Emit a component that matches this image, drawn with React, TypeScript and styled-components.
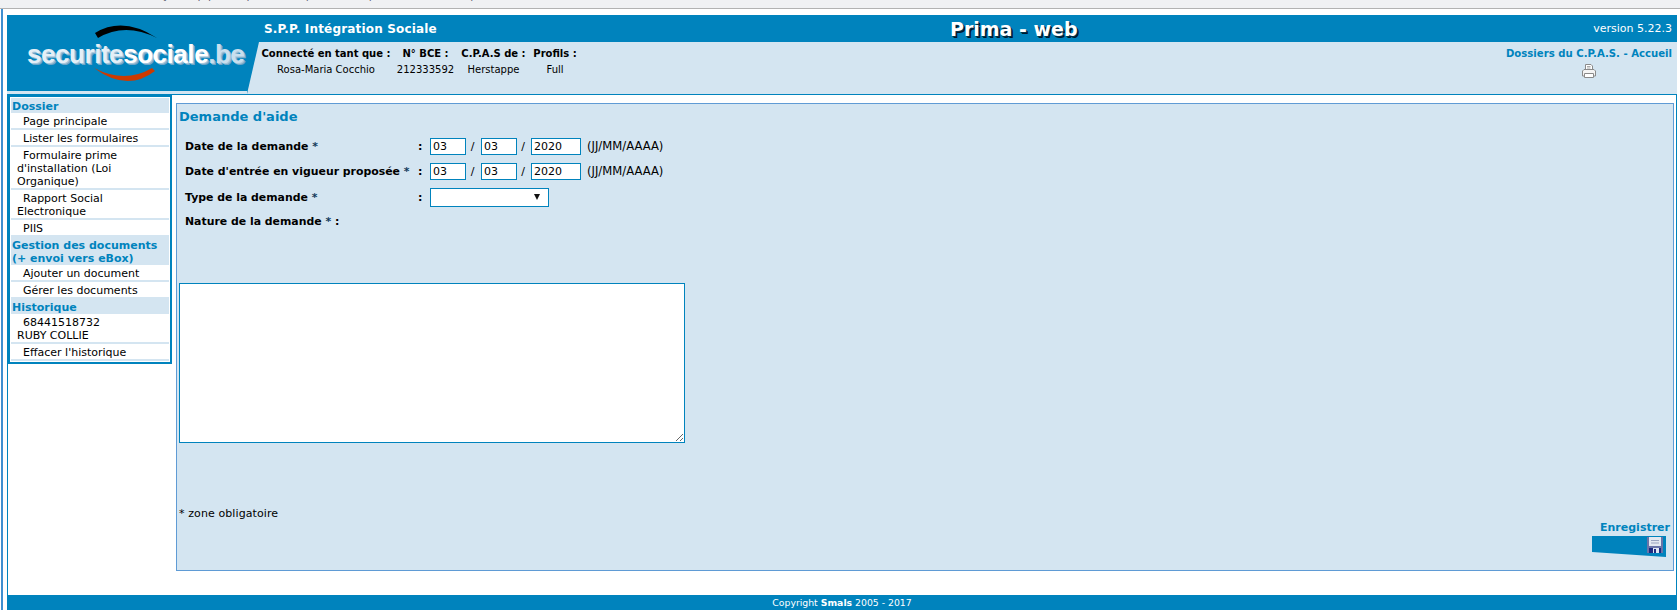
import React from 'react';
import styled, { createGlobalStyle } from 'styled-components';

const BLUE = '#0083bd';
const LIGHT = '#d4e5f1';

const GlobalStyle = createGlobalStyle`
    html, body {
        margin: 0;
        padding: 0;
        background: #fff;
        font-family: "DejaVu Sans", Verdana, sans-serif;
        font-size: 11px;
        color: #000;
    }
`;

const Page = styled.div`
    height: 610px;
    overflow: hidden;
`;

const BrowserStrip = styled.div`
    height: 8px;
    background: #f0f1f3;
    border-bottom: 1px solid #b2b2b2;
    overflow: hidden;
    padding-left: 163px;
    color: #667;
    line-height: 13px;
    white-space: pre;
`;

const ClippedLine = styled.div`
    margin-top: -11px;
`;

const Frame = styled.div`
    margin-left: 1px;
    border-left: 2px solid #3f8fd0;
    padding: 6px 3px 0 4px;
`;

const Header = styled.header`
    display: grid;
    grid-template-columns: 240px 1fr;
    height: 79px;
    background: ${BLUE};
    border-bottom: 1px solid ${BLUE};
`;

const LogoCell = styled.div`
    position: relative;
    display: flex;
    align-items: center;
    height: 76px;
    padding-left: 20px;
    border-bottom: 3px solid ${LIGHT};
`;

const LogoArcs = styled.svg`
    position: absolute;
    left: 80px;
    top: 8px;
`;

const LogoText = styled.div`
    position: relative;
    font-family: "Liberation Sans", Arial, sans-serif;
    font-weight: bold;
    font-size: 26px;
    letter-spacing: -0.45px;
    line-height: 30px;
    margin-top: 1px;
    white-space: nowrap;
    color: #fff;
    text-shadow: 1px 1px 0 #a4c6dc, 2px 2px 0 #6fa6c8;
`;

const LogoPart = styled.span<{ $tone: string }>`
    color: ${(p) => p.$tone};
`;

const HeaderRight = styled.div`
    display: flex;
    flex-direction: column;
`;

const TopBar = styled.div`
    display: grid;
    grid-template-columns: 703px auto 1fr;
    align-items: center;
    height: 27px;
    padding: 0 5px 0 17px;
    color: #fff;
    box-sizing: border-box;
`;

const Agency = styled.div`
    font-weight: bold;
    font-size: 12px;
    letter-spacing: 0.17px;
`;

const AppTitle = styled.div`
    font-weight: bold;
    font-size: 19px;
    margin-left: -17px;
    color: #fff;
    text-shadow: 1px 1px 0 #00314d, 2px 2px 0 #00182a;
`;

const Version = styled.div`
    justify-self: end;
    font-size: 11px;
`;

const SubBar = styled.div`
    display: flex;
    justify-content: space-between;
    height: 52px;
    padding: 5px 5px 0 14px;
    box-sizing: border-box;
    background: ${LIGHT};
    clip-path: polygon(12px 0, 100% 0, 100% 100%, 0 100%);
`;

const UserInfo = styled.div`
    display: grid;
    grid-template-columns: 130px 69px 67px 56px;
    grid-auto-rows: 13px;
    row-gap: 3px;
    justify-items: center;
    line-height: 13px;
    align-self: flex-start;
`;

const InfoHead = styled.div`
    font-weight: bold;
    font-size: 10px;
    white-space: nowrap;
`;

const InfoValue = styled.div`
    font-size: 10px;
    white-space: nowrap;
`;

const Links = styled.div`
    display: flex;
    flex-direction: column;
    align-items: center;
    line-height: 13px;
`;

const LinkRow = styled.div`
    color: ${BLUE};
    font-weight: bold;
    font-size: 10.15px;
`;

const PrinterIcon = styled.svg`
    margin-top: 3px;
`;

const Body = styled.div`
    display: flex;
    height: 500px;
    border-left: 1px solid ${BLUE};
    border-right: 1px solid ${BLUE};
`;

const SideColumn = styled.aside`
    width: 164px;
    flex: none;
`;

const SideMenu = styled.nav`
    box-sizing: border-box;
    border: 2px solid ${BLUE};
    padding: 1px;
    background: #fff;
`;

const MenuHead = styled.div`
    background: ${LIGHT};
    color: ${BLUE};
    font-weight: bold;
    font-size: 11px;
    line-height: 13px;
    padding: 2px 0 0 1px;
`;

const MenuItem = styled.div`
    line-height: 13px;
    font-size: 11px;
    padding: 2px 0 0 6px;
    text-indent: 6px;
    border-bottom: 2px solid ${LIGHT};
`;

const MainArea = styled.main`
    flex: 1;
    padding: 8px 2px 0 4px;
    min-width: 0;
`;

const Panel = styled.section`
    display: flex;
    flex-direction: column;
    height: 468px;
    box-sizing: border-box;
    border: 1px solid #5f9bd5;
    background: ${LIGHT};
    padding: 5px 0 0 2px;
`;

const Title = styled.h1`
    margin: 0 0 13px 0;
    color: ${BLUE};
    font-size: 13px;
    line-height: 16px;
    font-weight: bold;
`;

const FormGrid = styled.div`
    display: grid;
    grid-template-columns: 233px 12px auto;
    row-gap: 8px;
    margin-left: 6px;
    align-items: center;
    justify-content: start;
`;

const Label = styled.div<{ $wide?: boolean }>`
    font-weight: bold;
    font-size: 10.9px;
    line-height: 13px;
    white-space: nowrap;
    ${(p) => (p.$wide ? 'grid-column: 1 / -1;' : '')}
`;

const Star = styled.span`
    color: #123a5a;
`;

const Colon = styled.div`
    font-weight: bold;
`;

const DateFields = styled.div`
    display: flex;
    align-items: center;
`;

const DateInput = styled.input<{ $width: number }>`
    width: ${(p) => p.$width}px;
    height: 17px;
    box-sizing: border-box;
    border: 1px solid ${BLUE};
    border-radius: 0;
    background: #fff;
    padding: 0 2px;
    margin: 0;
    font-family: inherit;
    font-size: 11px;
    color: #000;
    outline: none;
`;

const Slash = styled.span<{ $width: number }>`
    width: ${(p) => p.$width}px;
    padding-right: 2px;
    box-sizing: border-box;
    text-align: center;
`;

const Hint = styled.span`
    margin: -2px 0 0 6px;
    font-size: 11.6px;
`;

const SelectWrap = styled.div`
    position: relative;
    width: 119px;
    height: 19px;

    &::after {
        content: '';
        position: absolute;
        right: 9px;
        top: 6px;
        border-left: 3px solid transparent;
        border-right: 3px solid transparent;
        border-top: 6px solid #111;
    }
`;

const TypeSelect = styled.select`
    display: block;
    width: 100%;
    height: 100%;
    appearance: none;
    border: 1px solid ${BLUE};
    border-radius: 0;
    background: #fff;
    margin: 0;
    padding: 0 2px;
    font-family: inherit;
    font-size: 11px;
    outline: none;
`;

const NatureArea = styled.textarea`
    display: block;
    width: 506px;
    height: 160px;
    box-sizing: border-box;
    margin: 55px 0 0 0;
    border: 1px solid ${BLUE};
    border-radius: 0;
    background: #fff;
    padding: 2px;
    font-family: inherit;
    font-size: 11px;
    outline: none;
    resize: both;
`;

const RequiredNote = styled.div`
    margin-top: 64px;
    line-height: 13px;
    font-size: 11px;
    letter-spacing: 0.1px;
`;

const SaveBlock = styled.div`
    align-self: flex-end;
    display: flex;
    flex-direction: column;
    align-items: flex-end;
    margin: 0 3px 0 0;
`;

const SaveLabel = styled.div`
    color: ${BLUE};
    font-weight: bold;
    font-size: 11px;
    line-height: 16px;
`;

const SaveButton = styled.button`
    display: flex;
    justify-content: flex-end;
    align-items: flex-start;
    width: 74px;
    height: 21px;
    margin: 0 4px 0 0;
    padding: 1px 3px 0 0;
    border: 0;
    background: ${BLUE};
    clip-path: polygon(0 0, 100% 0, 100% 100%, 0 16px);
`;

const Footer = styled.footer`
    height: 15px;
    background: ${BLUE};
    color: #fff;
    font-size: 9.3px;
    line-height: 15px;
    text-align: center;
`;

const Brand = styled.b`
    font-weight: bold;
`;

const Required = () => <Star> *</Star>;

const DateRow = ({ day }: { day: string }) => (
    <DateFields>
        <DateInput $width={36} value={day} readOnly />
        <Slash $width={15}>/</Slash>
        <DateInput $width={36} value={day} readOnly />
        <Slash $width={14}>/</Slash>
        <DateInput $width={50} value="2020" readOnly />
        <Hint>(JJ/MM/AAAA)</Hint>
    </DateFields>
);

const App = () => {
    return (
        <Page>
            <GlobalStyle />
            <BrowserStrip>
                <ClippedLine>{'y     ,  p p       , p               p                p                           p'}</ClippedLine>
            </BrowserStrip>
            <Frame>
                <Header>
                    <LogoCell>
                        <LogoArcs width="80" height="62" viewBox="0 0 80 62">
                            <path d="M8 10 Q36 -7 70 15 Q38 -1 11 15 Z" fill="#000" />
                            <path d="M7 45 Q38 61 65 45 L68 48 Q40 69.5 7 45 Z" fill="#cc3a00" />
                        </LogoArcs>
                        <LogoText>
                            <LogoPart $tone="#e4eff7">securite</LogoPart>
                            <LogoPart $tone="#ffffff">sociale</LogoPart>
                            <LogoPart $tone="#c9dfee">.be</LogoPart>
                        </LogoText>
                    </LogoCell>
                    <HeaderRight>
                        <TopBar>
                            <Agency>S.P.P. Intégration Sociale</Agency>
                            <AppTitle>Prima - web</AppTitle>
                            <Version>version 5.22.3</Version>
                        </TopBar>
                        <SubBar>
                            <UserInfo>
                                <InfoHead>Connecté en tant que :</InfoHead>
                                <InfoHead>N° BCE :</InfoHead>
                                <InfoHead>C.P.A.S de :</InfoHead>
                                <InfoHead>Profils :</InfoHead>
                                <InfoValue>Rosa-Maria Cocchio</InfoValue>
                                <InfoValue>212333592</InfoValue>
                                <InfoValue>Herstappe</InfoValue>
                                <InfoValue>Full</InfoValue>
                            </UserInfo>
                            <Links>
                                <LinkRow>Dossiers du C.P.A.S. - Accueil</LinkRow>
                                <PrinterIcon width="16" height="16" viewBox="0 0 16 16">
                                    <path d="M4.5 6.5 V1.5 H10 L11.5 3 V6.5" fill="#fff" stroke="#8a8a8a" />
                                    <path d="M6 3.5 H9.5 M6 5 H9.5" stroke="#aaa" />
                                    <path d="M1.5 13 V8 L3 6.5 H13 L14.5 8 V13 Z" fill="#f4f4f4" stroke="#8a8a8a" />
                                    <path d="M3.5 10.5 H12.5 V14.5 H3.5 Z" fill="#fff" stroke="#8a8a8a" />
                                </PrinterIcon>
                            </Links>
                        </SubBar>
                    </HeaderRight>
                </Header>
                <Body>
                    <SideColumn>
                        <SideMenu>
                            <MenuHead>Dossier</MenuHead>
                            <MenuItem>Page principale</MenuItem>
                            <MenuItem>Lister les formulaires</MenuItem>
                            <MenuItem>Formulaire prime d'installation (Loi Organique)</MenuItem>
                            <MenuItem>Rapport Social Electronique</MenuItem>
                            <MenuItem>PIIS</MenuItem>
                            <MenuHead>Gestion des documents (+ envoi vers eBox)</MenuHead>
                            <MenuItem>Ajouter un document</MenuItem>
                            <MenuItem>Gérer les documents</MenuItem>
                            <MenuHead>Historique</MenuHead>
                            <MenuItem>68441518732<br />RUBY COLLIE</MenuItem>
                            <MenuItem>Effacer l'historique</MenuItem>
                        </SideMenu>
                    </SideColumn>
                    <MainArea>
                        <Panel>
                            <Title>Demande d'aide</Title>
                            <FormGrid>
                                <Label>Date de la demande<Required /></Label>
                                <Colon>:</Colon>
                                <DateRow day="03" />
                                <Label>Date d'entrée en vigueur proposée<Required /></Label>
                                <Colon>:</Colon>
                                <DateRow day="03" />
                                <Label>Type de la demande<Required /></Label>
                                <Colon>:</Colon>
                                <SelectWrap>
                                    <TypeSelect defaultValue="">
                                        <option value=""></option>
                                    </TypeSelect>
                                </SelectWrap>
                                <Label $wide>Nature de la demande<Required /> :</Label>
                            </FormGrid>
                            <NatureArea />
                            <RequiredNote>* zone obligatoire</RequiredNote>
                            <SaveBlock>
                                <SaveLabel>Enregistrer</SaveLabel>
                                <SaveButton type="button" aria-label="Enregistrer">
                                    <svg width="16" height="16" viewBox="0 0 16 16">
                                        <rect width="16" height="16" fill="#6a74a8" />
                                        <rect x="2" y="0" width="12" height="9" fill="#e4e8f0" />
                                        <path d="M4 3.5 H12 M4 6 H12" stroke="#9aa4c0" />
                                        <rect x="2" y="11" width="12" height="5" fill="#1f2a80" />
                                        <rect x="6" y="11" width="6" height="5" fill="#dfe6f2" />
                                        <rect x="7" y="12" width="2" height="4" fill="#1f2a80" />
                                    </svg>
                                </SaveButton>
                            </SaveBlock>
                        </Panel>
                    </MainArea>
                </Body>
                <Footer>
                    Copyright <Brand>Smals</Brand> 2005 - 2017
                </Footer>
            </Frame>
        </Page>
    );
};

export default App;
